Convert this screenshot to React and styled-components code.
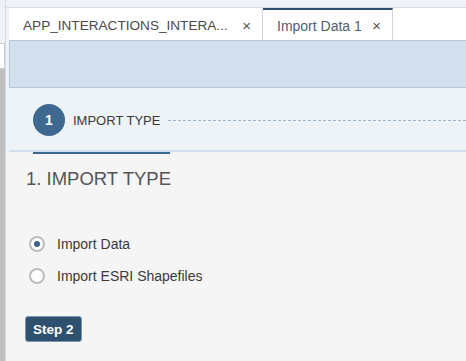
import React from "react";
import styled, { createGlobalStyle } from "styled-components";

const Global = createGlobalStyle`
  html, body { margin: 0; padding: 0; }
  body {
    background: #eef1f5;
    font-family: "Liberation Sans", Arial, sans-serif;
    overflow: hidden;
  }
`;

const Frame = styled.div`
  display: flex;
  height: 361px;
  width: 466px;
  overflow: hidden;
`;

const LeftRail = styled.div`
  width: 5px;
  display: flex;
  flex-direction: column;
  flex-shrink: 0;
  border-right: 1px solid #d6dbe2;
  background: #eef1f5;
`;

const RailBox = styled.div`
  margin-top: 43px;
  height: 26px;
  background: #ffffff;
  border: 1px solid #c9cdd3;
  border-left: none;
  box-sizing: border-box;
`;

const RailFill = styled.div`
  flex: 1;
  background: #bfbfbf;
`;

const Main = styled.div`
  flex: 1;
  display: flex;
  flex-direction: column;
  min-width: 0;
  background: #eef1f5;
`;

const TopStrip = styled.div`
  height: 7px;
  border-bottom: 1px solid #d9dee4;
  flex-shrink: 0;
`;

const TabBar = styled.div`
  margin-left: 3px;
  display: flex;
  height: 32px;
  background: #ffffff;
  flex-shrink: 0;
`;

const Tab = styled.div`
  display: flex;
  align-items: center;
  box-sizing: border-box;
  width: ${(p) => p.$w}px;
  padding: 0 11px 0 14px;
  border-right: 1px solid #d3d8de;
  border-top: 2px solid ${(p) => (p.$active ? "#2f4f6e" : "transparent")};
  font-size: ${(p) => (p.$active ? 14 : 13.6)}px;
  color: ${(p) => (p.$active ? "#50606f" : "#4a4a4a")};
  white-space: nowrap;
`;

const TabLabel = styled.span`
  flex: 1;
  padding-top: 1px;
`;

const Close = styled.span`
  font-size: 15px;
  color: #555;
  line-height: 1;
`;

const Header = styled.div`
  margin-left: 3px;
  height: 48px;
  background: #d1e0ec;
  border: 1px solid #b3c8dc;
  border-right: none;
  box-sizing: border-box;
  flex-shrink: 0;
`;

const StepBar = styled.div`
  height: 62px;
  background: #eef3f8;
  display: flex;
  align-items: center;
  padding-left: 27px;
  padding-top: 2px;
  box-sizing: border-box;
  flex-shrink: 0;
`;

const StepCircle = styled.div`
  width: 32px;
  height: 32px;
  border-radius: 50%;
  background: #3f6890;
  color: #fff;
  font-weight: bold;
  font-size: 14px;
  display: flex;
  align-items: center;
  justify-content: center;
  flex-shrink: 0;
`;

const StepLabel = styled.span`
  margin-left: 8px;
  font-size: 13px;
  color: #3a3a3a;
  white-space: nowrap;
`;

const Dashes = styled.div`
  flex: 1;
  height: 1px;
  margin-left: 8px;
  background: repeating-linear-gradient(
    to right,
    #9cb4ca 0 3px,
    transparent 3px 5px
  );
`;

const StepLine = styled.div`
  margin-left: 3px;
  height: 2px;
  background: #d3e1ee;
  flex-shrink: 0;
`;

const Content = styled.div`
  flex: 1;
  background: #f5f5f5;
  display: flex;
  flex-direction: column;
  align-items: flex-start;
`;

const ActiveBar = styled.div`
  margin-left: 27px;
  width: 137px;
  height: 2px;
  background: #3f6890;
`;

const Title = styled.h1`
  margin: 13px 0 0 20px;
  font-size: 18.5px;
  font-weight: normal;
  line-height: 24px;
  color: #555;
`;

const RadioGroup = styled.div`
  margin: 37px 0 0 23px;
  display: flex;
  flex-direction: column;
`;

const RadioRow = styled.label`
  display: flex;
  align-items: center;
  height: 32px;
  font-size: 14px;
  color: #3a3a3a;
`;

const RadioDot = styled.span`
  width: 16px;
  height: 16px;
  border-radius: 50%;
  border: 2px solid #bcbcbc;
  box-sizing: border-box;
  background: #fff;
  display: flex;
  align-items: center;
  justify-content: center;
  margin-right: 12px;
  &::after {
    content: "";
    width: 6px;
    height: 6px;
    border-radius: 50%;
    background: ${(p) => (p.$checked ? "#3a6389" : "transparent")};
  }
`;

const Button = styled.button`
  margin: 24px 0 0 19px;
  height: 26px;
  padding: 0 7px;
  background: #2f5170;
  border: 1px solid #7f97ad;
  border-radius: 3px;
  color: #fff;
  font-family: "Liberation Sans", Arial, sans-serif;
  font-weight: bold;
  font-size: 13.5px;
`;

export default function App() {
  return (
    <>
      <Global />
      <Frame>
        <LeftRail>
          <RailBox />
          <RailFill />
        </LeftRail>
        <Main>
          <TopStrip />
          <TabBar>
            <Tab $w={254}>
              <TabLabel>APP_INTERACTIONS_INTERA...</TabLabel>
              <Close>×</Close>
            </Tab>
            <Tab $w={130} $active>
              <TabLabel>Import Data 1</TabLabel>
              <Close>×</Close>
            </Tab>
          </TabBar>
          <Header />
          <StepBar>
            <StepCircle>1</StepCircle>
            <StepLabel>IMPORT TYPE</StepLabel>
            <Dashes />
          </StepBar>
          <StepLine />
          <Content>
            <ActiveBar />
            <Title>1. IMPORT TYPE</Title>
            <RadioGroup>
              <RadioRow>
                <RadioDot $checked />
                Import Data
              </RadioRow>
              <RadioRow>
                <RadioDot />
                Import ESRI Shapefiles
              </RadioRow>
            </RadioGroup>
            <Button>Step 2</Button>
          </Content>
        </Main>
      </Frame>
    </>
  );
}
